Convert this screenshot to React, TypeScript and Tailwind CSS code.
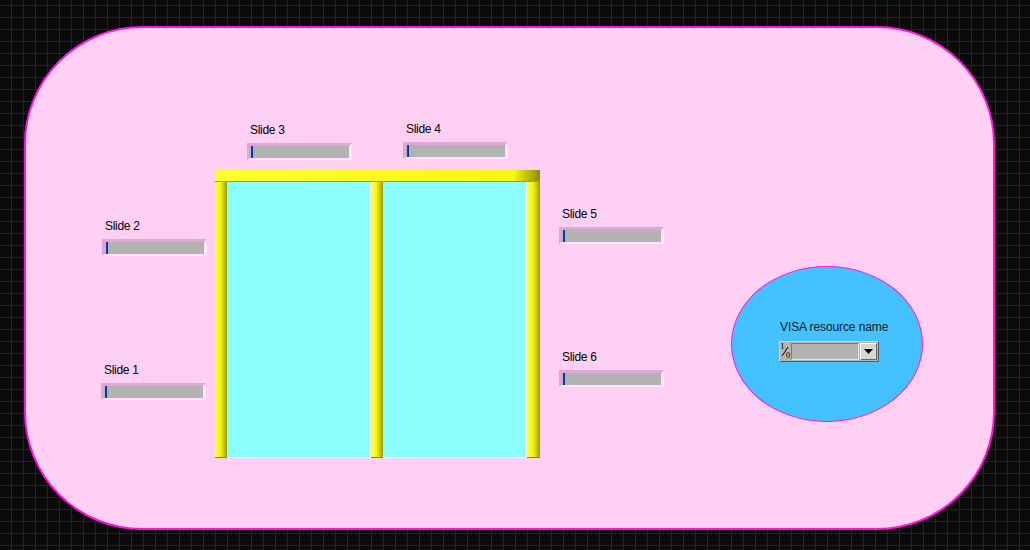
const slides = [
  { label: "Slide 3", pos: "left-[221px] top-[95px]" },
  { label: "Slide 4", pos: "left-[377px] top-[94px]" },
  { label: "Slide 2", pos: "left-[76px] top-[191px]" },
  { label: "Slide 1", pos: "left-[75px] top-[335px]" },
  { label: "Slide 5", pos: "left-[533px] top-[179px]" },
  { label: "Slide 6", pos: "left-[533px] top-[322px]" },
];

const SlideIndicator = ({ label, pos }: { label: string; pos: string }) => (
  <div className={`absolute flex flex-col ${pos}`}>
    <span className="pl-[3px] text-[12px] leading-[14px] tracking-[-0.3px] text-black">
      {label}
    </span>
    <div className="mt-[6px] h-[17px] w-[105px] border-t-[3px] border-r-[3px] border-b-[2px] border-l-[3px] border-t-[#e2a6d6] border-r-[#ffe4fb] border-b-[#ffe4fb] border-l-[#e2a6d6] bg-[#b3b3b3]">
      <div className="ml-[1px] h-full w-[2px] bg-gradient-to-r from-[#1a46e0] to-[#002a9c]" />
    </div>
  </div>
);

const Post = ({ w }: { w: string }) => (
  <div
    className={`${w} h-full border-b border-[#8a8a00] bg-gradient-to-r from-[#ffff48] via-[#f2f200] to-[#9c9c00]`}
  />
);

const Pane = () => (
  <div className="h-full w-[144px] border-r border-b border-[#ecfffe] bg-[#8cfffc]" />
);

const VisaControl = () => (
  <div className="flex flex-col items-start">
    <span className="pl-[1px] text-[12px] leading-[14px] tracking-[-0.1px] text-[#0a1a22]">
      VISA resource name
    </span>
    <div className="mt-[7px] flex h-[21px] w-[100px] border border-t-[#d8d8d8] border-l-[#d8d8d8] border-r-[#5a5a5a] border-b-[#5a5a5a] bg-[#b4b4b4]">
      <div className="relative h-full w-[11px] font-['Liberation_Serif',serif] text-[8px] leading-[8px] text-black">
        <span className="absolute top-[1px] left-[1px]">I</span>
        <svg className="absolute top-0 left-0" width="11" height="19" viewBox="0 0 11 19">
          <line x1="2" y1="14" x2="8" y2="5" stroke="#000" strokeWidth="1" />
        </svg>
        <span className="absolute right-[1px] bottom-[1px]">0</span>
      </div>
      <div className="my-[1px] flex-1 border border-t-[#7a7a7a] border-l-[#7a7a7a] border-r-[#e4e4e4] border-b-[#e4e4e4] bg-[#b3b3b3]" />
      <div className="m-[1px] flex w-[17px] items-center justify-center border border-t-white border-l-white border-r-[#6a6a6a] border-b-[#6a6a6a] bg-[#d6d6d6]">
        <svg width="9" height="5" viewBox="0 0 9 5">
          <polygon points="0,0 9,0 4.5,5" fill="#000" />
        </svg>
      </div>
    </div>
  </div>
);

export default function App() {
  return (
    <div className="h-[550px] w-[1030px] overflow-hidden bg-[#0a0a0a] bg-[linear-gradient(to_right,#242424_1px,transparent_1px),linear-gradient(to_bottom,#242424_1px,transparent_1px)] bg-[size:12px_12px] bg-[position:11px_5px] pt-[26px] pl-[24px] font-['Liberation_Sans',sans-serif]">
      <div className="relative h-[504px] w-[971px] rounded-[118px] border-2 border-[#ff14dc] bg-[#ffd0f4]">
        {/* yellow frame with two panes */}
        <div className="absolute top-[142px] left-[189px] flex h-[288px] w-[325px] flex-col">
          <div className="h-[12px] w-full border-b border-[#a4a400] bg-[linear-gradient(to_right,#ffff30_0%,#f6f614_92%,#8c8c00_100%)]" />
          <div className="flex flex-1">
            <Post w="w-[12px]" />
            <Pane />
            <Post w="w-[12px]" />
            <Pane />
            <Post w="w-[13px]" />
          </div>
        </div>

        {slides.map((s) => (
          <SlideIndicator key={s.label} label={s.label} pos={s.pos} />
        ))}

        {/* VISA ellipse */}
        <div className="absolute top-[238px] left-[705px] flex h-[156px] w-[192px] flex-col items-start rounded-[50%] border border-[#ff14dc] bg-[#44c2ff] pt-[53px] pl-[47px]">
          <VisaControl />
        </div>
      </div>
    </div>
  );
}
